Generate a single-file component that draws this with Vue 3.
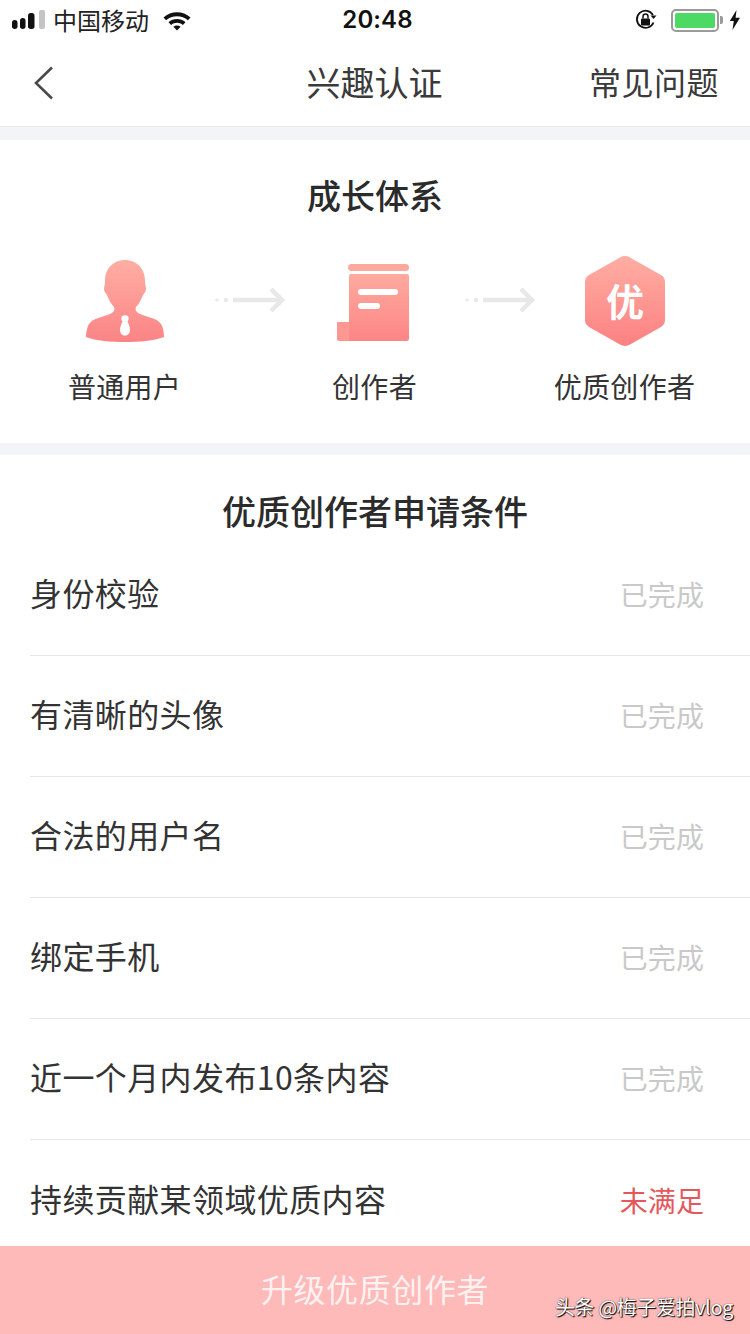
<script setup>
const rows = [
  { name: '身份校验', status: '已完成' },
  { name: '有清晰的头像', status: '已完成' },
  { name: '合法的用户名', status: '已完成' },
  { name: '绑定手机', status: '已完成' },
  { name: '近一个月内发布10条内容', status: '已完成' },
  { name: '持续贡献某领域优质内容', status: '未满足', bad: true }
]
</script>

<template>
  <div class="page">
    <div class="status">
      <div class="st-left">
        <svg class="signal" width="34" height="20" viewBox="0 0 34 20">
          <rect x="0" y="10" width="5.500" height="9" rx="2.700" fill="#111" />
          <rect x="8" y="8" width="5.500" height="11" rx="2.700" fill="#111" />
          <rect x="16" y="3" width="6.500" height="16" rx="2.700" fill="#111" />
          <rect x="27" y="0" width="6" height="19" rx="2" fill="#c4c4c4" />
        </svg>
        <span class="carrier">中国移动</span>
        <svg class="wifi" width="30" height="22" viewBox="0 0 30 22">
          <path d="M1.500 8.500C9 1.500 21 1.500 28.500 8.500l-2.600 2.800C20 5.800 10 5.800 4.100 11.300z" fill="#111" />
          <path d="M6.500 13.200c4.800-4.400 12.200-4.400 17 0l-2.600 2.700c-3.400-3-8.400-3-11.800 0z" fill="#111" />
          <path d="M11.400 17.800c2-1.700 5.200-1.700 7.200 0L15 21.600z" fill="#111" />
        </svg>
      </div>
      <span class="clock">20:48</span>
      <div class="st-right">
        <svg class="lock" width="24" height="24" viewBox="0 0 24 24">
          <path d="M19.500 14.500A8.600 8.600 0 1 1 19 7" fill="none" stroke="#111" stroke-width="1.800" />
          <path d="M16.500 7.500h6l-3 3.600z" fill="#111" />
          <rect x="7" y="10.500" width="9" height="7" rx="1" fill="#111" />
          <path d="M9 10.500V8.600a2.500 2.500 0 0 1 5 0v1.900" fill="none" stroke="#111" stroke-width="1.500" />
        </svg>
        <div class="battery"><div class="battery-fill"></div></div>
        <div class="nub"></div>
        <svg class="bolt" width="12" height="20" viewBox="0 0 12 20">
          <path d="M7.500 0 0.800 11h4l-1.300 9 7.500-12.200H6.600z" fill="#111" />
        </svg>
      </div>
    </div>

    <header class="nav">
      <svg class="back" width="22" height="36" viewBox="0 0 22 36">
        <path d="M19 2.500 3 18l16 15.500" fill="none" stroke="#4a4a4a" stroke-width="2.600" />
      </svg>
      <h1 class="nav-title">兴趣认证</h1>
      <span class="nav-link">常见问题</span>
    </header>

    <section class="growth">
      <h2 class="growth-title">成长体系</h2>
      <div class="steps">
        <div class="step">
          <svg class="step-icon" width="80" height="92" viewBox="0 0 80 92">
            <defs>
              <linearGradient id="g1" x1="0" y1="0" x2="0" y2="1">
                <stop offset="0" stop-color="#ffaea4" />
                <stop offset="1" stop-color="#fb8485" />
              </linearGradient>
            </defs>
            <path d="M40 4c12 0 20 9 20 21 0 4 1 6 1 8 0 3-2 4-3 6-2 5-4 9-7 12-1 3 0 5 4 7 7 3 17 4 21 10 2 3 3 9 3 13-10 4-25 5-39 5s-29-1-39-5c0-4 1-10 3-13 4-6 14-7 21-10 4-2 5-4 4-7-3-3-5-7-7-12-1-2-3-3-3-6 0-2 1-4 1-8C20 13 28 4 40 4z" fill="url(#g1)" />
            <path d="M37 60c1.500-1 4.500-1 6 0 1 1.500 1 3.500-.5 5.500 1.500 3 2.500 6 2.500 9 0 3-2.500 5-5 5s-5-2-5-5c0-3 1-6 2.500-9-1.500-2-1.500-4-.5-5.500z" fill="#fff" />
          </svg>
          <span class="step-label">普通用户</span>
        </div>
        <svg class="arrow" width="72" height="32" viewBox="0 0 72 32">
          <circle cx="4" cy="16" r="1.800" fill="#ececec" />
          <circle cx="13" cy="16" r="2.200" fill="#e9e9e9" />
          <path d="M20 16h48M58 5l11 11-11 11" fill="none" stroke="#e8e8e8" stroke-width="4.500" />
        </svg>
        <div class="step">
          <svg class="step-icon" width="76" height="92" viewBox="0 0 76 92">
            <defs>
              <linearGradient id="g2" x1="0" y1="0" x2="0" y2="1">
                <stop offset="0" stop-color="#ffaa9e" />
                <stop offset="1" stop-color="#fc8686" />
              </linearGradient>
            </defs>
            <rect x="11" y="8" width="61" height="7" rx="3.500" fill="#ffa89c" />
            <path d="M14 18h56a2 2 0 0 1 2 2v63a2 2 0 0 1-2 2H3a3 3 0 0 1-3-3V66h12V20a2 2 0 0 1 2-2z" fill="url(#g2)" />
            <path d="M0 66h12v19H3a3 3 0 0 1-3-3z" fill="#fc9791" />
            <rect x="21" y="33" width="40" height="6" rx="3" fill="#fff" />
            <rect x="21" y="47" width="22" height="6" rx="3" fill="#fff" />
          </svg>
          <span class="step-label">创作者</span>
        </div>
        <svg class="arrow" width="72" height="32" viewBox="0 0 72 32">
          <circle cx="4" cy="16" r="1.800" fill="#ececec" />
          <circle cx="13" cy="16" r="2.200" fill="#e9e9e9" />
          <path d="M20 16h48M58 5l11 11-11 11" fill="none" stroke="#e8e8e8" stroke-width="4.500" />
        </svg>
        <div class="step">
          <div class="hex-wrap">
            <svg width="82" height="92" viewBox="0 0 82 92">
              <defs>
                <linearGradient id="g3" x1="0" y1="0" x2="0" y2="1">
                  <stop offset="0" stop-color="#ffaea3" />
                  <stop offset="1" stop-color="#fc8181" />
                </linearGradient>
              </defs>
              <path d="M36 1.500a10 10 0 0 1 10 0l31 17.500a8 8 0 0 1 4 7v38a8 8 0 0 1-4 7L46 88.500a10 10 0 0 1-10 0L5 71a8 8 0 0 1-4-7V26a8 8 0 0 1 4-7z" fill="url(#g3)" />
            </svg>
            <span class="hex-text">优</span>
          </div>
          <span class="step-label">优质创作者</span>
        </div>
      </div>
    </section>

    <section class="conditions">
      <h2 class="cond-title">优质创作者申请条件</h2>
      <ul class="cond-list">
        <li v-for="row in rows" :key="row.name" class="cond-row">
          <span class="cond-name">{{ row.name }}</span>
          <span class="cond-status" :class="{ bad: row.bad }">{{ row.status }}</span>
        </li>
      </ul>
    </section>

    <footer class="cta">
      <span class="cta-text">升级优质创作者</span>
      <span class="watermark">头条 @梅子爱拍vlog</span>
    </footer>
  </div>
</template>

<style scoped>
.page {
  position: relative;
  width: 750px;
  height: 1334px;
  overflow: hidden;
  background: #fff;
  font-family: "Noto Sans CJK SC", "Noto Sans", sans-serif;
  color: #333;
}
.status {
  position: relative;
  height: 40px;
  display: flex;
  align-items: center;
  justify-content: space-between;
  padding: 0 9px 0 12px;
}
.st-left, .st-right { display: flex; align-items: center; }
.carrier { margin-left: 7px; font-size: 24px; color: #222; line-height: 40px; }
.wifi { margin-left: 13px; }
.clock {
  position: absolute;
  left: 5px;
  right: 0;
  text-align: center;
  font: 600 24px/40px Inter, sans-serif;
  letter-spacing: 0.1px;
  color: #111;
}
.lock { margin-right: 13px; }
.battery {
  width: 48px;
  height: 23px;
  border: 2px solid #9a9a9a;
  border-radius: 5px;
  padding: 2px;
  box-sizing: border-box;
}
.battery-fill { height: 100%; background: #4cd964; border-radius: 2px; }
.nub { width: 3px; height: 8px; background: #999; margin: 0 6px 0 1px; border-radius: 0 2px 2px 0; }
.nav {
  position: relative;
  height: 87px;
  box-sizing: border-box;
  border-bottom: 1px solid #e8e9eb;
  display: flex;
  align-items: center;
  justify-content: space-between;
  padding: 0 31px 0 33px;
}
.nav-title {
  position: absolute;
  left: -1px;
  right: 0;
  margin: 0 0 4px;
  text-align: center;
  font-size: 34px;
  font-weight: 400;
  color: #3a3a3a;
}
.nav-link { font-size: 32px; letter-spacing: 0.5px; margin-bottom: 4px; color: #3a3a3a; }
.growth {
  margin-top: 13px;
  height: 303px;
  box-sizing: border-box;
  padding-top: 31px;
  box-shadow: 0 -13px 0 #f3f4f7, 0 12px 0 #f3f4f7;
}
.growth-title {
  margin: 0;
  text-align: center;
  font-size: 34px;
  line-height: 48px;
  font-weight: 500;
  color: #2b2b2b;
}
.steps {
  display: grid;
  grid-template-columns: 250px 0 250px 0 250px;
  margin-top: 37px;
  position: relative;
}
.step { display: flex; flex-direction: column; align-items: center; }
.hex-wrap { position: relative; width: 82px; height: 92px; }
.hex-wrap svg { display: block; }
.hex-text {
  position: absolute;
  inset: 0;
  text-align: center;
  line-height: 88px;
  font-size: 38px;
  font-weight: 700;
  color: #fff;
}
.step-icon { display: block; }
.step-label { margin-top: 18px; font-size: 28px; line-height: 40px; letter-spacing: 0.3px; margin-right: 1px; color: #333; }
.arrow { position: relative; left: -37px; top: 28px; }
.conditions { margin-top: 12px; }
.cond-title {
  margin: 0;
  height: 80px;
  padding-top: 30px;
  box-sizing: border-box;
  text-align: center;
  font-size: 34px;
  line-height: 52px;
  font-weight: 500;
  color: #2b2b2b;
}
.cond-list { list-style: none; margin: 0; padding: 0 0 0 30px; }
.cond-row {
  height: 121px;
  box-sizing: border-box;
  border-bottom: 1px solid #e6e6e6;
  display: flex;
  align-items: center;
  justify-content: space-between;
  padding-right: 46px;
  padding-bottom: 2px;
}
.cond-row:last-child { border-bottom: 0; }
.cond-name { font-size: 32px; letter-spacing: 0.4px; margin-bottom: 4px; color: #333; }
.cond-status { font-size: 28px; letter-spacing: 0.1px; color: #c9c9c9; }
.cond-status.bad { color: #e4585c; }
.cta {
  position: absolute;
  left: 0;
  right: 0;
  bottom: 0;
  height: 88px;
  background: #feb9b9;
  display: flex;
  align-items: center;
  justify-content: center;
}
.cta-text { font-size: 32px; letter-spacing: 0.6px; margin-bottom: 4px; color: #fff; opacity: 0.8; }
.watermark {
  position: absolute;
  right: 17px;
  bottom: 13px;
  font-size: 20px;
  line-height: 28px;
  letter-spacing: -0.4px;
  color: #fff;
  text-shadow: 1px 1px 1px #000, 0 0 1px #000;
}
</style>
